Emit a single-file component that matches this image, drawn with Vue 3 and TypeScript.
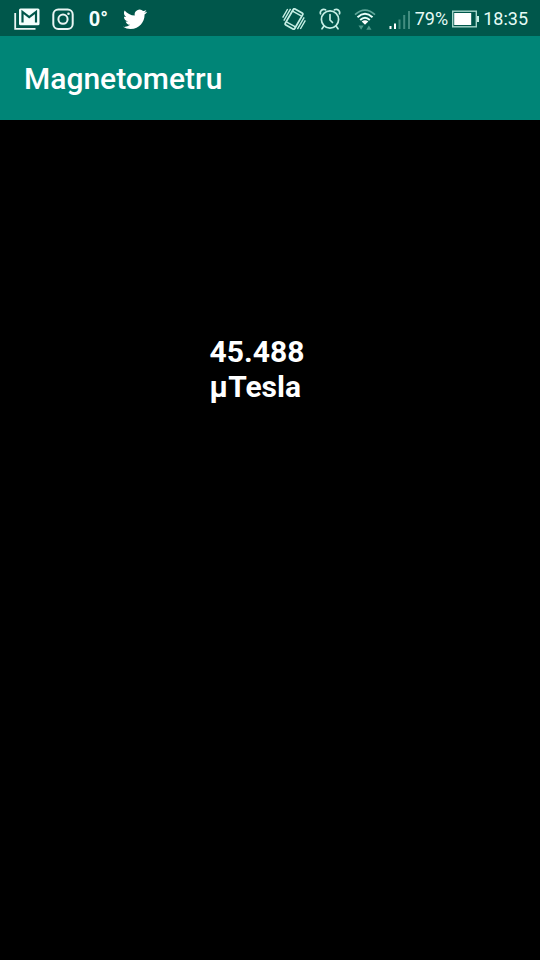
<script setup lang="ts">
import { ref } from 'vue'

const title = ref<string>('Magnetometru')
const fieldStrength = ref<number>(45.488)
const unit = 'µTesla'
const temperature = '0°'
const battery = '79%'
const time = '18:35'
</script>

<template>
  <div class="screen">
    <div class="status">
      <div class="notifications">
        <svg width="26" height="22" viewBox="0 0 26 22" aria-label="Gmail">
          <path d="M1.200 5V20.800H21.500" fill="none" stroke="#e9f5f3" stroke-width="1.800" />
          <rect x="5" y="0.500" width="20.500" height="16.800" rx="1.500" fill="#f4fffd" />
          <path d="M8.500 14.500V4L15.200 9.200L22 4V14.500" fill="none" stroke="#00574b" stroke-width="2.200" />
        </svg>
        <svg width="22" height="22" viewBox="0 0 22 22" aria-label="Instagram">
          <g fill="none" stroke="#e9f5f3" stroke-width="2">
            <rect x="1.300" y="1.500" width="19.400" height="19.400" rx="5" />
            <circle cx="11" cy="11.200" r="4.600" />
          </g>
          <circle cx="16.500" cy="5.800" r="1.300" fill="#e9f5f3" />
        </svg>
        <span class="temperature">{{ temperature }}</span>
        <svg width="24" height="22" viewBox="0 0 24 22" aria-label="Twitter">
          <path
            transform="translate(0 -0.700)"
            fill="#fff"
            d="M23.953 4.57a10 10 0 01-2.825.775 4.958 4.958 0 002.163-2.723c-.951.555-2.005.959-3.127 1.184a4.92 4.92 0 00-8.384 4.482C7.69 8.095 4.067 6.13 1.64 3.162a4.822 4.822 0 00-.666 2.475c0 1.71.87 3.213 2.188 4.096a4.904 4.904 0 01-2.228-.616v.06a4.923 4.923 0 003.946 4.827 4.996 4.996 0 01-2.212.085 4.936 4.936 0 004.604 3.417 9.867 9.867 0 01-6.102 2.105c-.39 0-.779-.023-1.17-.067a13.995 13.995 0 007.557 2.209c9.053 0 13.998-7.496 13.998-13.985 0-.21 0-.42-.015-.63A9.935 9.935 0 0024 4.59z"
          />
        </svg>
      </div>

      <div class="system">
        <div class="indicators">
          <svg width="24" height="22" viewBox="0 0 24 22" fill="none" stroke="#c5eee4" stroke-width="1.400" aria-label="Vibrate">
            <g transform="rotate(30 12 11)">
              <rect x="6.600" y="1.800" width="10.800" height="18.400" rx="1.300" stroke-width="1.800" />
              <path d="M6.800 4.800H17.200M6.800 17.200H17.200" />
              <path d="M4 4V17.500M1.500 5.500V15.500M20 4.500V18M22.500 6.500V16.500" />
            </g>
          </svg>
          <svg width="22" height="22" viewBox="0 0 22 22" fill="none" stroke="#c5eee4" stroke-width="1.700" stroke-linecap="round" aria-label="Alarm">
            <circle cx="11" cy="11.500" r="8.600" />
            <path d="M11 6.500V12L13.500 14.500M5 18L3 20.800M17 18L19 20.800" />
            <path d="M1.500 5.800C0.600 3 3.500 0.500 6.500 1.800M20.500 5.800C21.400 3 18.500 0.500 15.500 1.800" />
          </svg>
          <svg width="22" height="22" viewBox="0 0 22 22" fill="none" aria-label="Wi-Fi">
            <path d="M1 6.700Q11 -2.500 21 6.700" stroke="#5fa79a" stroke-width="1.600" />
            <path d="M3.500 9.200Q11 2.400 18.500 9.200" stroke="#e9fffa" stroke-width="2" />
            <path d="M6.200 12Q11 7.600 15.800 12" stroke="#e9fffa" stroke-width="2" />
            <path d="M7.700 13.500Q11 11 14.300 13.500L11 16.800Z" fill="#fff" />
            <path d="M4.500 17.500H9.700L7.100 21.800ZM12.300 21.800H17.500L14.900 17.500Z" fill="#4c998b" />
          </svg>
          <svg width="22" height="22" viewBox="0 0 22 22" aria-label="Signal">
            <path d="M0.500 18H2.500V21H0.500ZM5 15.500H7V21H5Z" fill="#fff" />
            <path d="M9.500 11.500H11.500V21H9.500ZM14.200 7H16.200V21H14.200ZM19 3H21V21H19Z" fill="#428d80" />
          </svg>
        </div>
        <span>{{ battery }}</span>
        <svg width="27" height="18" viewBox="0 0 27 18" aria-label="Battery">
          <rect x="0.700" y="1.200" width="23.600" height="15.600" fill="none" stroke="#a4d5ca" stroke-width="1.400" />
          <rect x="2.200" y="3" width="17" height="12" fill="#fff" />
          <path d="M25 6H27V12H25Z" fill="#c5eee4" />
        </svg>
        <time>{{ time }}</time>
      </div>
    </div>

    <header class="toolbar">
      <h1>{{ title }}</h1>
    </header>

    <main class="content">
      <p class="reading">{{ fieldStrength }}<br />{{ unit }}</p>
    </main>
  </div>
</template>

<style>
body {
  margin: 0;
  background: #000;
}
</style>

<style scoped>
.screen {
  display: flex;
  flex-direction: column;
  min-height: 100vh;
  background: #000;
  color: #fff;
  font-family: Roboto, "Liberation Sans", sans-serif;
}

.status {
  display: flex;
  align-items: center;
  justify-content: space-between;
  box-sizing: border-box;
  height: 36px;
  padding: 1px 12px 0 14px;
  background: #00574b;
  color: #e6fbf6;
  font-size: 18px;
  line-height: 20px;
}

.notifications,
.indicators {
  display: flex;
  align-items: center;
  gap: 13px;
}

.notifications {
  gap: 12px;
}

.system {
  display: flex;
  align-items: center;
  gap: 4px;
}

.temperature {
  width: 25px;
  color: #f4fffd;
  font-size: 20px;
  font-weight: 700;
  text-align: center;
}

.toolbar {
  display: flex;
  align-items: center;
  box-sizing: border-box;
  height: 84px;
  padding: 2px 24px 0;
  background: #008577;
}

h1 {
  margin: 0;
  font-size: 30px;
  font-weight: 500;
  line-height: 36px;
}

.content {
  display: flex;
  flex: 1;
  justify-content: center;
  align-items: flex-start;
  padding: 214px 26px 0 0;
}

.reading {
  margin: 0;
  font-size: 30px;
  font-weight: 700;
  line-height: 35px;
}
</style>
